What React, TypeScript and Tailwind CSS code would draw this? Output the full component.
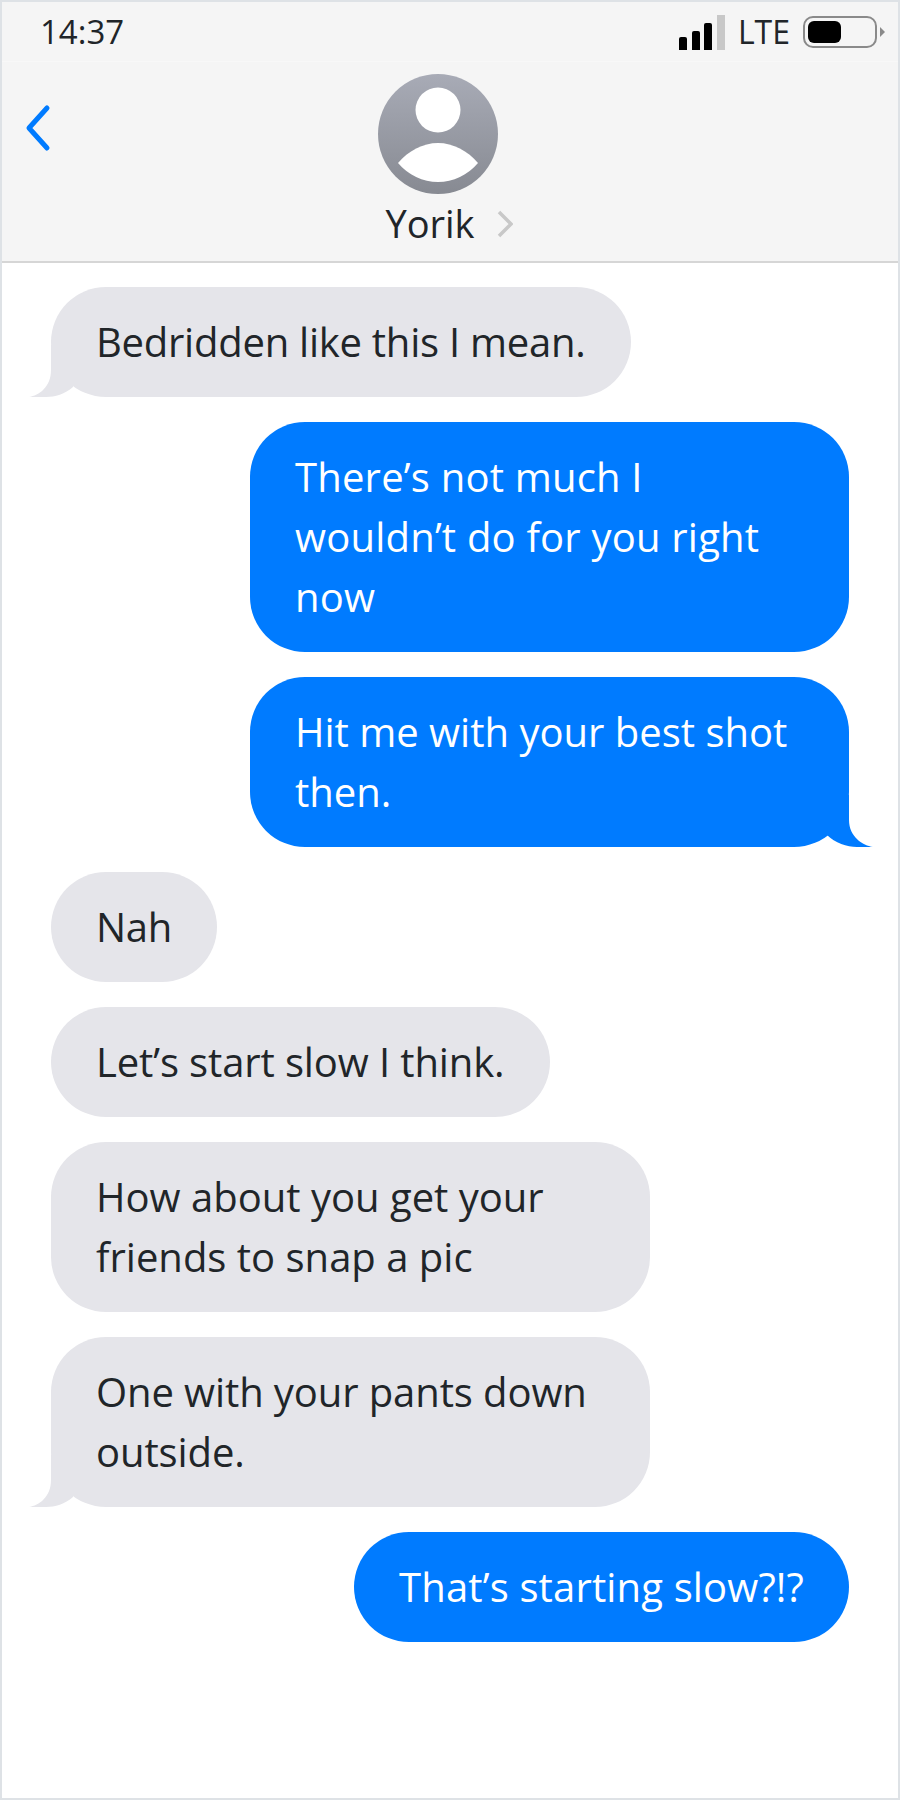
import React from 'react';

type Msg = { text: string; me?: boolean; tail?: boolean; track?: string };

const messages: Msg[] = [
  { text: 'Bedridden like this I mean.', tail: true, track: 'tracking-[-0.25px]' },
  { text: 'There’s not much I\nwouldn’t do for you right\nnow', me: true, track: 'tracking-[0.2px]' },
  { text: 'Hit me with your best shot\nthen.', me: true, tail: true },
  { text: 'Nah', track: 'tracking-[-0.3px]' },
  { text: 'Let’s start slow I think.', track: 'tracking-[-0.12px]' },
  { text: 'How about you get your\nfriends to snap a pic' },
  { text: 'One with your pants down\noutside.', tail: true, track: 'tracking-[-0.1px]' },
  { text: 'That’s starting slow?!?', me: true, track: 'tracking-[0.15px]' },
];

const Bubble = ({ text, me, tail, track }: Msg) => (
  <div className={`relative rounded-[55px] px-[45px] py-[25px] whitespace-pre-line ${track ?? ''} ${text.includes('\n') ? 'w-[599px]' : 'w-fit'} ${me ? 'self-end bg-[#007bff] text-white' : 'self-start bg-[#e5e5ea] text-[#212529]'}`}>
    {text}
    {tail && !me && (
      <svg className="absolute bottom-0 left-[-22px]" width="60" height="60" viewBox="0 0 60 60">
        <path d="M0 60C10 58.5 22 50 22 33L22 8L44 8L44 50C36 57 26 60 17 60Z" fill="#e5e5ea" />
      </svg>
    )}
    {tail && me && (
      <svg className="absolute bottom-0 right-[-24px]" width="60" height="60" viewBox="0 0 60 60">
        <path d="M60 60C50 58.5 36 50 36 33L36 8L14 8L14 48C22 56 34 60 44 60Z" fill="#007bff" />
      </svg>
    )}
  </div>
);

const App = () => {
  return (
    <div className="w-[900px] h-[1800px] border-2 border-[#dee2e6] bg-white text-[#212529] font-['Open_Sans',sans-serif]">
      <div className="h-[261px] bg-[#f5f5f5] border-b-2 border-[#d6d6d6] flex flex-col">
        {/* status bar */}
        <div className="h-[60px] flex items-center justify-between pl-[38px] pr-[13px] text-[33px] border-b border-[#f8f8f8]">
          <span>14:37</span>
          <div className="flex items-center">
            <div className="flex items-end gap-[4.7px] h-[36px]">
              <div className="w-[8px] h-[13px] bg-black rounded-t-[2px]"></div>
              <div className="w-[8px] h-[19px] bg-black rounded-t-[2px]"></div>
              <div className="w-[8px] h-[27px] bg-black rounded-t-[2px]"></div>
              <div className="w-[8px] h-[35px] bg-[#c8c8c8]"></div>
            </div>
            <span className="ml-[13px] text-[32px]">LTE</span>
            <div className="ml-[13px] w-[74px] h-[32px] rounded-[10px] border-2 border-[#8a8a8a] p-[3px]">
              <div className="w-[33px] h-full bg-black rounded-[6px]"></div>
            </div>
            <div className="ml-[3px] w-0 h-0 border-y-[5px] border-y-transparent border-l-[5px] border-l-[#8a8a8a]"></div>
          </div>
        </div>
        {/* contact */}
        <div className="relative flex flex-col items-center pr-[24px]">
          <svg className="absolute left-[23px] top-[41px]" width="28" height="50" viewBox="0 0 28 50">
            <path d="M22 5L4 25L22 45" fill="none" stroke="#007bff" strokeWidth="5" strokeLinecap="round" strokeLinejoin="round" />
          </svg>
          <svg className="mt-[12px]" width="120" height="120" viewBox="0 0 120 120">
            <defs>
              <linearGradient id="avatar" x1="0" y1="0" x2="0" y2="1">
                <stop offset="0" stopColor="#a8abb6" />
                <stop offset="1" stopColor="#878a92" />
              </linearGradient>
            </defs>
            <circle cx="60" cy="60" r="60" fill="url(#avatar)" />
            <circle cx="60" cy="36" r="22.5" fill="#fff" />
            <path d="M20 89C30 77 45 69 60 69C75 69 90 77 100 89C90 101 75 108 60 108C45 108 30 101 20 89Z" fill="#fff" />
          </svg>
          <div className="relative mr-[16px] text-[38px] leading-[58px]">
            <span>Yorik</span>
            <svg className="absolute left-[112px] top-[16px]" width="16" height="28" viewBox="0 0 16 28">
              <path d="M2 2L14 14L2 26" fill="none" stroke="#c8c8c8" strokeWidth="3.5" />
            </svg>
          </div>
        </div>
      </div>
      <div className="flex flex-col gap-[25px] pt-[24px] pl-[49px] pr-[49px] text-[40px] leading-[60px]">
        {messages.map((m) => (
          <Bubble key={m.text} {...m} />
        ))}
      </div>
    </div>
  );
};

export default App;
